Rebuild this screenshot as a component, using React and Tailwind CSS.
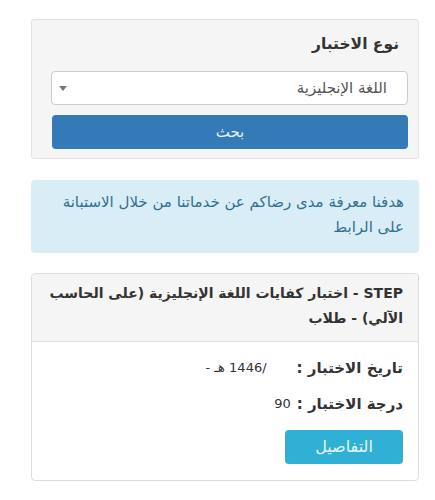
import React from 'react';

const font = { fontFamily: '"DejaVu Sans", "Liberation Sans", sans-serif' };

export default function App() {
  return (
    <div dir="rtl" className="w-full min-h-[500px] bg-white pt-[19px] text-[#333]" style={font}>
      {/* search panel */}
      <div className="ml-[31px] mr-[16px] h-[140px] rounded-[3px] border border-[#e3e3e3] bg-[#f5f5f5] pr-[10px] pl-[9px] pt-[12px]">
        <div className="pr-[9px] text-[15.5px] font-bold leading-[24px]">نوع الاختبار</div>
        <div className="mt-[15px] ml-[10px] flex h-[34px] items-center justify-between rounded-[4px] border border-[#ccc] bg-white pr-[20px] pl-[7px]">
          <span className="text-[15px] text-[#555]">اللغة الإنجليزية</span>
          <svg width="8" height="5" viewBox="0 0 8 5"><path d="M0 0h8L4 5z" fill="#777" /></svg>
        </div>
        <button className="mt-[10px] ml-[1px] flex h-[34px] w-[calc(100%-11px)] items-center justify-center rounded-[4px] bg-[#337ab7] text-[15px] text-[#e8f0f8]">
          بحث
        </button>
      </div>

      {/* info alert */}
      <div className="mt-[21px] ml-[31px] mr-[16px] rounded-[4px] bg-[#d9edf7] pt-[10px] pb-[13px] pr-[15px] pl-[15px] text-[15px] leading-[25px] text-[#31708f]">
        هدفنا معرفة مدى رضاكم عن خدماتنا من خلال الاستبانة على الرابط
      </div>

      {/* result panel */}
      <div className="mt-[20px] ml-[31px] mr-[16px] overflow-hidden rounded-[4px] border border-[#ddd] bg-white">
        <div className="border-b border-[#ddd] bg-[#f5f5f5] pt-[7px] pb-[10px] pr-[15px] pl-[4px] text-[14px] font-bold leading-[25px]">
          <span className="whitespace-nowrap">STEP - اختبار كفايات اللغة الإنجليزية (على الحاسب</span>
          <br />
          الآلي) - طلاب
        </div>
        <div className="pr-[15px] pt-[14px] pb-[16px]">
          <div className="flex items-center leading-[24px]">
            <span className="text-[15px] font-bold">تاريخ الاختبار :</span>
            <span className="mr-[30px] text-[13px]">/1446 هـ -</span>
          </div>
          <div className="mt-[12px] flex items-center leading-[24px]">
            <span className="text-[15px] font-bold">درجة الاختبار :</span>
            <span className="mr-[6px] text-[13px]">90</span>
          </div>
          <button className="mt-[14px] flex h-[34px] w-[118px] items-center justify-center rounded-[4px] bg-[#31b0d5] text-[16px] text-[#e6f6fb]">
            التفاصيل
          </button>
        </div>
      </div>
    </div>
  );
}
